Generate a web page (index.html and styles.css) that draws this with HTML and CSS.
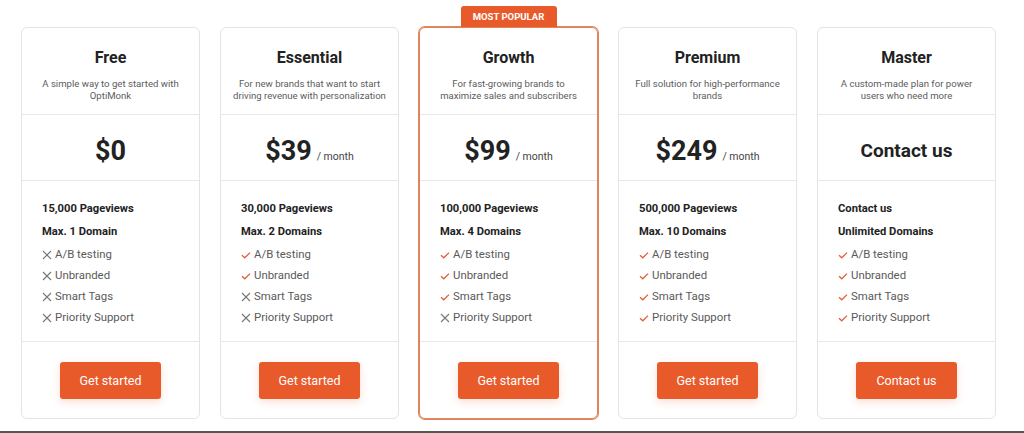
FILE: index.html
```html
<!DOCTYPE html>
<html lang="en">
<head>
    <meta charset="UTF-8">
    <meta name="viewport" content="width=device-width, initial-scale=1.0">
    <title>Pricing</title>
    <link rel="stylesheet" href="styles.css">
</head>
<body>

    <div class="plans">
        <div class="plan">
            <div class="plan-head">
                <h2>Free</h2>
                <p>A simple way to get started with OptiMonk</p>
            </div>
            <div class="plan-price"><span class="amount">$0</span></div>
            <ul class="plan-features">
                <li class="strong">15,000 Pageviews</li>
                <li class="strong gap">Max. 1 Domain</li>
                <li class="no">A/B testing</li>
                <li class="no">Unbranded</li>
                <li class="no">Smart Tags</li>
                <li class="no">Priority Support</li>
            </ul>
            <div class="plan-foot"><button class="button">Get started</button></div>
        </div>

        <div class="plan">
            <div class="plan-head">
                <h2>Essential</h2>
                <p>For new brands that want to start driving revenue with personalization</p>
            </div>
            <div class="plan-price"><span class="amount">$39</span><span class="per">/ month</span></div>
            <ul class="plan-features">
                <li class="strong">30,000 Pageviews</li>
                <li class="strong gap">Max. 2 Domains</li>
                <li class="yes">A/B testing</li>
                <li class="yes">Unbranded</li>
                <li class="no">Smart Tags</li>
                <li class="no">Priority Support</li>
            </ul>
            <div class="plan-foot"><button class="button">Get started</button></div>
        </div>

        <div class="plan popular">
            <div class="badge">MOST POPULAR</div>
            <div class="plan-head">
                <h2>Growth</h2>
                <p>For fast-growing brands to<br>maximize sales and subscribers</p>
            </div>
            <div class="plan-price"><span class="amount">$99</span><span class="per">/ month</span></div>
            <ul class="plan-features">
                <li class="strong">100,000 Pageviews</li>
                <li class="strong gap">Max. 4 Domains</li>
                <li class="yes">A/B testing</li>
                <li class="yes">Unbranded</li>
                <li class="yes">Smart Tags</li>
                <li class="no">Priority Support</li>
            </ul>
            <div class="plan-foot"><button class="button">Get started</button></div>
        </div>

        <div class="plan">
            <div class="plan-head">
                <h2>Premium</h2>
                <p>Full solution for high-performance brands</p>
            </div>
            <div class="plan-price"><span class="amount">$249</span><span class="per">/ month</span></div>
            <ul class="plan-features">
                <li class="strong">500,000 Pageviews</li>
                <li class="strong gap">Max. 10 Domains</li>
                <li class="yes">A/B testing</li>
                <li class="yes">Unbranded</li>
                <li class="yes">Smart Tags</li>
                <li class="yes">Priority Support</li>
            </ul>
            <div class="plan-foot"><button class="button">Get started</button></div>
        </div>

        <div class="plan">
            <div class="plan-head">
                <h2>Master</h2>
                <p>A custom-made plan for power users who need more</p>
            </div>
            <div class="plan-price"><span class="amount contact">Contact us</span></div>
            <ul class="plan-features">
                <li class="strong">Contact us</li>
                <li class="strong gap">Unlimited Domains</li>
                <li class="yes">A/B testing</li>
                <li class="yes">Unbranded</li>
                <li class="yes">Smart Tags</li>
                <li class="yes">Priority Support</li>
            </ul>
            <div class="plan-foot"><button class="button">Contact us</button></div>
        </div>
    </div>

    <div class="rule"></div>

</body>
</html>
```

FILE: styles.css
```css
body {
    margin: 0;
    font-family: Roboto, "Liberation Sans", Arial, sans-serif;
    background-color: #fff;
    color: #222;
}
.plans {
    display: flex;
    gap: 20px;
    padding: 27px 0 0 21px;
}
.plan {
    position: relative;
    width: 179px;
    height: 392px;
    box-sizing: border-box;
    border: 1px solid #e4e4e4;
    border-radius: 6px;
    display: flex;
    flex-direction: column;
}
.plan.popular {
    border-color: #e0845c;
    box-shadow: 0 0 0 1px #e0845c;
}
.badge {
    position: absolute;
    top: -22px;
    left: 50%;
    transform: translateX(-50%);
    width: 96px;
    height: 21px;
    line-height: 21px;
    background: #e95a2b;
    color: #fff;
    font-size: 9.5px;
    font-weight: 700;
    text-align: center;
    border-radius: 3px 3px 0 0;
}
.plan-head {
    height: 87px;
    box-sizing: border-box;
    padding: 20px 10px 0;
    text-align: center;
    border-bottom: 1px solid #e8e8e8;
}
.plan-head h2 {
    margin: 0;
    font-size: 16px;
    line-height: 20px;
    font-weight: 700;
    color: #222;
}
.plan-head p {
    margin: 10px 0 0;
    font-size: 9.6px;
    line-height: 12px;
    color: #5c5c5c;
}
.plan-price {
    height: 66px;
    box-sizing: border-box;
    display: flex;
    justify-content: center;
    align-items: baseline;
    padding-top: 20px;
    border-bottom: 1px solid #e8e8e8;
}
.amount {
    font-size: 27px;
    font-weight: 700;
    line-height: 32px;
    color: #222;
}
.amount.contact {
    font-size: 19px;
}
.per {
    margin-left: 5px;
    font-size: 10.5px;
    color: #444;
}
.plan-features {
    list-style: none;
    margin: 0;
    height: 161px;
    box-sizing: border-box;
    padding: 17px 10px 0 20px;
    border-bottom: 1px solid #e8e8e8;
    font-size: 11.4px;
}
.plan-features li {
    line-height: 21px;
    color: #5a5a5a;
}
.plan-features li.strong {
    font-weight: 700;
    color: #222;
    font-size: 11.2px;
    margin-bottom: 2px;
}
.plan-features li.yes,
.plan-features li.no {
    padding-left: 13px;
    background-repeat: no-repeat;
    background-position: 0 center;
    background-size: 10px 10px;
}
.plan-features li.yes {
    background-image: url("data:image/svg+xml,%3Csvg xmlns='http://www.w3.org/2000/svg' viewBox='0 0 10 10'%3E%3Cpath d='M1 5.2 L3.8 7.8 L9 2.6' fill='none' stroke='%23e0603a' stroke-width='1.3'/%3E%3C/svg%3E");
}
.plan-features li.no {
    background-image: url("data:image/svg+xml,%3Csvg xmlns='http://www.w3.org/2000/svg' viewBox='0 0 10 10'%3E%3Cpath d='M1 1 L9 9 M9 1 L1 9' fill='none' stroke='%23777' stroke-width='1.1'/%3E%3C/svg%3E");
}
.plan-foot {
    flex: 1;
    display: flex;
    justify-content: center;
    padding-top: 20px;
}
.button {
    width: 101px;
    height: 37px;
    border: none;
    border-radius: 3px;
    background-color: #e95a2b;
    color: #fff;
    font-family: inherit;
    font-size: 12.5px;
    cursor: pointer;
    box-shadow: 0 3px 8px rgba(233, 90, 43, 0.2);
}
.rule {
    margin-top: 12px;
    height: 2px;
    background: #555;
}
```
